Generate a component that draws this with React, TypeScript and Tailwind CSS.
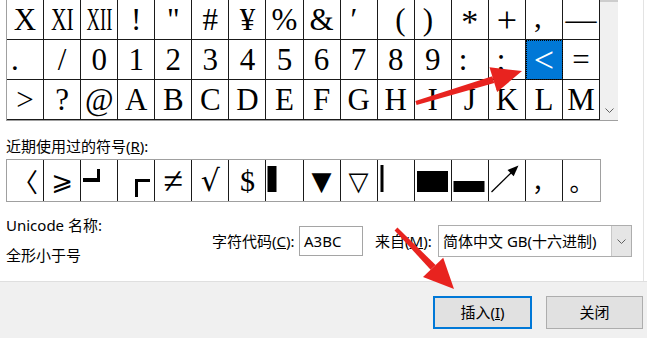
import React from "react";

type TCell = {
  ch: React.ReactNode;
  cls?: string;
  selected?: boolean;
};

const uiFont = "font-['Noto_Sans','Noto_Sans_CJK_SC',sans-serif]";

const gridRows: TCell[][] = [
  [
    { ch: "X" },
    { ch: <span className="inline-block scale-x-70">XI</span> },
    { ch: <span className="inline-block scale-x-60">XII</span> },
    { ch: "!" },
    { ch: '"' },
    { ch: "#" },
    { ch: "¥" },
    { ch: "%" },
    { ch: "&" },
    { ch: "′", cls: "justify-start pl-[10px]" },
    { ch: "(", cls: "justify-end pr-[8px]" },
    { ch: ")", cls: "justify-start pl-[8px]" },
    { ch: "*", cls: "items-end text-[34px]" },
    { ch: "+", cls: "text-[36px]" },
    { ch: ",", cls: "justify-start items-start pl-[8px] leading-[34px]" },
    { ch: "—" },
  ],
  [
    { ch: ".", cls: "justify-start pl-[4px]" },
    { ch: "/" },
    { ch: "0" },
    { ch: "1" },
    { ch: "2" },
    { ch: "3" },
    { ch: "4" },
    { ch: "5" },
    { ch: "6" },
    { ch: "7" },
    { ch: "8" },
    { ch: "9" },
    { ch: ":", cls: "justify-start pl-[7px]" },
    { ch: ";", cls: "justify-start pl-[8px]" },
    { ch: "<", cls: "text-[36px]", selected: true },
    { ch: "=" },
  ],
  [
    { ch: ">" },
    { ch: "?" },
    { ch: "@" },
    { ch: "A" },
    { ch: "B" },
    { ch: "C" },
    { ch: "D" },
    { ch: "E" },
    { ch: "F" },
    { ch: "G" },
    { ch: "H" },
    { ch: "I" },
    { ch: "J" },
    { ch: "K" },
    { ch: "L" },
    { ch: "M" },
  ],
];

const Shape = ({ children }: { children: React.ReactNode }) => (
  <svg width="36" height="41" viewBox="0 0 36 41" className="block">
    {children}
  </svg>
);

const recent: React.ReactNode[] = [
  <span className="font-['Noto_Sans_CJK_SC',sans-serif] text-[26px]">〈</span>,
  <span className="font-['DejaVu_Sans',sans-serif] text-[26px]">⩾</span>,
  <Shape>
    <rect x="2" y="18" width="17" height="4" fill="#000" />
    <rect x="16" y="9" width="3" height="13" fill="#000" />
  </Shape>,
  <Shape>
    <rect x="17" y="19" width="15" height="3" fill="#000" />
    <rect x="17" y="19" width="3" height="18" fill="#000" />
  </Shape>,
  <span className="font-['Liberation_Serif',serif] text-[36px]">≠</span>,
  <span className="font-['DejaVu_Serif',serif] text-[30px]">√</span>,
  <span className="font-['Liberation_Serif',serif] text-[30px]">$</span>,
  <Shape>
    <rect x="1.5" y="6" width="9" height="26" fill="#000" />
  </Shape>,
  <span className="font-['DejaVu_Sans',sans-serif] text-[26px]">▼</span>,
  <span className="font-['DejaVu_Sans',sans-serif] text-[26px]">▽</span>,
  <Shape>
    <rect x="2.5" y="5" width="3" height="27" fill="#000" />
  </Shape>,
  <Shape>
    <rect x="2" y="11" width="31" height="21" fill="#000" />
  </Shape>,
  <Shape>
    <rect x="1.5" y="21" width="31" height="11" fill="#000" />
  </Shape>,
  <Shape>
    <line x1="2.5" y1="32" x2="23" y2="12" stroke="#000" strokeWidth="1.3" />
    <polygon points="29.5,5.5 24.7,16.3 18.5,9.9" fill="#000" />
  </Shape>,
  <span className="font-['Noto_Sans_CJK_SC',sans-serif] text-[24px]">，</span>,
  <span className="font-['Noto_Sans_CJK_SC',sans-serif] text-[24px]">。</span>,
];

function Chevron({ className }: { className?: string }) {
  return (
    <svg width="9" height="5" viewBox="0 0 9 5" className={className}>
      <polyline points="0.5,0.5 4.5,4.5 8.5,0.5" fill="none" stroke="#606060" strokeWidth="1" />
    </svg>
  );
}

export default function App() {
  return (
    <div className={`relative w-[647px] h-[338px] overflow-hidden bg-[#f0f0f0] text-black ${uiFont}`}>
      {/* white dialog body */}
      <div className="h-[282px] bg-white border-b border-[#dfdfdf]">
        <div className="w-[644px] h-full border-r border-[#e3e3e3] pl-[6px]">
          {/* symbol grid */}
          <div className="flex w-[612px] border-l border-b border-[#a0a0a0]">
            <div className="grid grid-cols-16 w-[593px] font-['Liberation_Serif','Noto_Sans_CJK_SC',serif] text-[31px] leading-none">
              {gridRows.flat().map((cell, i) => (
                <div
                  key={i}
                  className={`flex items-center justify-center h-[40px] border-r border-b border-[#1a1a1a] ${
                    cell.selected
                      ? "bg-[#0078d7] text-white outline-1 outline-dotted outline-black -outline-offset-1"
                      : ""
                  } ${cell.cls ?? ""}`}
                >
                  {cell.ch}
                </div>
              ))}
            </div>
            <div className="w-[18px] bg-[#f0f0f0] flex flex-col justify-between">
              <div className="h-[2px] bg-[#cdcdcd]" />
              <Chevron className="mx-auto mb-[7px]" />
            </div>
          </div>

          <div className="mt-[17px] h-[16px] text-[15px] leading-[16px]">
            近期使用过的符号(<span className="underline">R</span>):
          </div>

          {/* recently used symbols */}
          <div className="mt-[5px] w-[595px] border border-[#a0a0a0] grid grid-cols-16">
            {recent.map((item, i) => (
              <div
                key={i}
                className={`h-[41px] flex items-center justify-center leading-none ${
                  i < 15 ? "border-r border-[#1a1a1a]" : ""
                }`}
              >
                {item}
              </div>
            ))}
          </div>

          {/* name + code */}
          <div className="flex text-[15px] leading-[16px]">
            <div className="w-[206px] pt-[15px] flex flex-col gap-[14px]">
              <div>Unicode 名称:</div>
              <div>全形小于号</div>
            </div>
            <div className="pt-[23px] flex items-center h-[55px]">
              <span className="w-[87px]">
                字符代码(<span className="underline">C</span>):
              </span>
              <div className="w-[64px] h-[30px] border border-[#a5a5a5] flex items-center pl-[4px]">
                A3BC
              </div>
              <span className="ml-[12px] w-[63px]">
                来自(<span className="underline">M</span>):
              </span>
              <div className="w-[194px] h-[32px] border border-[#adadad] flex">
                <div className="flex-1 flex items-center pl-[4px]">简体中文 GB(十六进制)</div>
                <div className="w-[20px] bg-[#e5e5e5] border-l border-[#c8c8c8] flex items-center justify-center">
                  <Chevron />
                </div>
              </div>
            </div>
          </div>
        </div>
      </div>

      {/* buttons */}
      <div className="flex justify-end gap-[14px] pt-[14px] pr-[4px] text-[15px]">
        <button className="w-[99px] h-[33px] bg-[#e1e1e1] border-2 border-[#0078d7] flex items-center justify-center">
          插入(<span className="underline">I</span>)
        </button>
        <button className="w-[97px] h-[33px] bg-[#e1e1e1] border border-[#adadad] flex items-center justify-center">
          关闭
        </button>
      </div>

      {/* red annotation arrows */}
      <svg className="absolute inset-0 pointer-events-none" width="647" height="338" viewBox="0 0 647 338">
        <polygon points="416.6,104.9 415.4,101.1 492.3,76.35 494.3,83.05" fill="#e8231f" />
        <polygon points="522,71 497.1,92.1 489.5,67.3" fill="#e8231f" />
        <polygon points="394.6,230.4 397.4,227.6 435.6,265 430.6,269.8" fill="#e8231f" />
        <polygon points="454,289 423,277.1 443.2,257.7" fill="#e8231f" />
      </svg>
    </div>
  );
}
